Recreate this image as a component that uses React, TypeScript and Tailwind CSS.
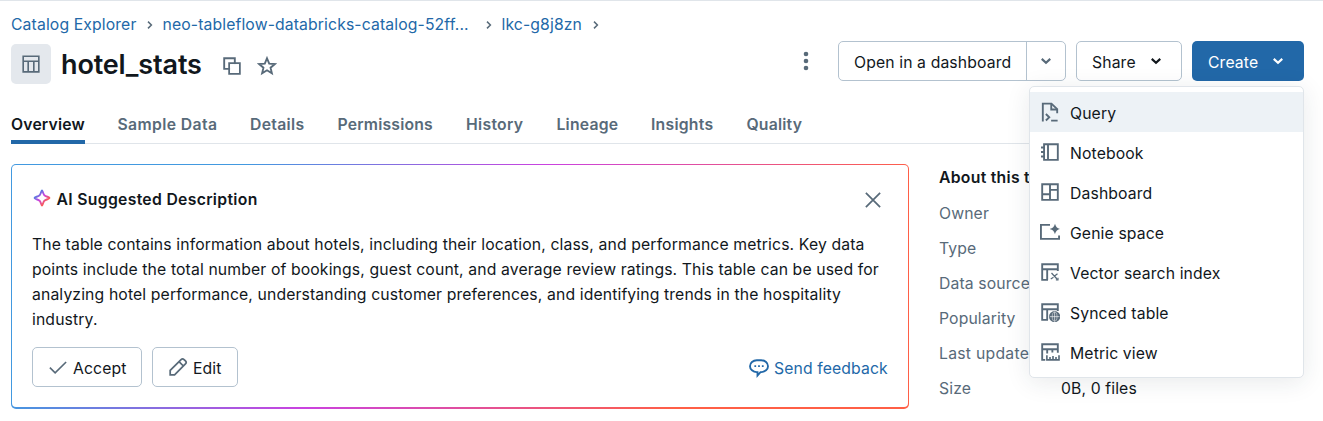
import type { ReactNode } from "react";

type IconProps = { children: ReactNode; className?: string };

function Icon({ children, className = "" }: IconProps) {
  return (
    <svg viewBox="0 0 16 16" className={`size-5 shrink-0 ${className}`} fill="none" stroke="currentColor" strokeWidth="1.5">
      {children}
    </svg>
  );
}

function Chevron({ className = "" }: { className?: string }) {
  return (
    <Icon className={className}>
      <path d="M4.6 6.3 8 9.5l3.4-3.2" strokeWidth="1.7" />
    </Icon>
  );
}

function Separator({ className }: { className: string }) {
  return (
    <svg viewBox="0 0 6 10" className={`h-[10px] w-[6px] shrink-0 text-[#586a79] ${className}`} fill="none" stroke="currentColor" strokeWidth="1.5">
      <path d="M1 1.6 4.4 5 1 8.4" />
    </svg>
  );
}

const tableTop = "M6.4 14.25H1.75V1.75h12.5v5.5M1.75 5.75h12.5";

const menu: { label: string; icon: ReactNode }[] = [
  {
    label: "Query",
    icon: (
      <>
        <path d="M2.25 15.6V1.25h6.9l4.6 4.5V9" />
        <path d="M9 1.500v4.500h4.700" />
        <path d="m4.700 9.600 2.700 2.600-2.700 2.600M8.900 14.850h5.200" />
      </>
    ),
  },
  {
    label: "Notebook",
    icon: <path d="M3.250 1.750h11v12.500h-11zM6.400 1.750v12.500M.8 4.400h2.400M.8 8h2.400M.8 11.600h2.400" />,
  },
  {
    label: "Dashboard",
    icon: <path d="M1.750 1.750h12.500v12.500H1.750zM8 1.750v12.500M1.750 9.750H8M8 6.250h6.250" />,
  },
  {
    label: "Genie space",
    icon: (
      <>
        <path d="M8 2.250H.750v11.200h14.500v-2.700" />
        <path d="M12 1.400c.8 2.600 1.600 3.400 4.200 4.200-2.600.8-3.400 1.600-4.200 4.200-.8-2.600-1.600-3.400-4.200-4.200C10.400 4.800 11.200 4 12 1.400z" fill="currentColor" stroke="none" />
      </>
    ),
  },
  {
    label: "Vector search index",
    icon: (
      <>
        <path d={tableTop} />
        <path d="M5.750 5.750v8.500" />
        <path d="m9.200 8.800 4.600 5M14 9.400l-2.600 2M8.600 13.600l2.200-1.400" strokeWidth="1" />
        <path d="M14.400 12.600v1.700h-1.700" strokeWidth=".9" />
      </>
    ),
  },
  {
    label: "Synced table",
    icon: (
      <>
        <path d={tableTop} />
        <path d="M5.750 5.750v8.500" />
        <circle cx="11.700" cy="11.700" r="4.500" fill="currentColor" stroke="none" />
        <path d="M7.800 11.700h7.800M11.700 7.800v7.800" stroke="white" strokeWidth=".5" />
        <ellipse cx="11.700" cy="11.700" rx="1.900" ry="3.700" stroke="white" strokeWidth=".4" />
      </>
    ),
  },
  {
    label: "Metric view",
    icon: (
      <>
        <path d="M4.200 14.250H1.750V1.750h12.500V8.600M1.750 5.750h12.500M5.750 5.750V9.200M9.900 5.750V8.400" />
        <path d="M5.500 10.500v3.750h9.700V10.500M8 14.250V12M10.400 14.250v-3M12.800 14.250V12" strokeWidth="1.300" />
      </>
    ),
  },
];

const tabs = [
  { label: "Overview", width: "w-[74px]", spacing: "tracking-[0.16px]" },
  { label: "Sample Data", width: "w-[100px]", spacing: "tracking-[0.38px]" },
  { label: "Details", width: "w-[55px]", spacing: "tracking-[0.3px]" },
  { label: "Permissions", width: "w-[96px]", spacing: "tracking-[0.18px]" },
  { label: "History", width: "w-[58px]", spacing: "tracking-[0.3px]" },
  { label: "Lineage", width: "w-[62px]", spacing: "tracking-[0.2px]" },
  { label: "Insights", width: "w-[63px]", spacing: "tracking-[0.25px]" },
  { label: "Quality", width: "w-[57px]", spacing: "tracking-[0.2px]" },
];

const details = ["Owner", "Type", "Data source", "Popularity", "Last updated", "Size"];

function CreateMenu() {
  return (
    <div className="absolute top-[49px] right-0 z-10 h-[292px] w-[275px] rounded-[5px] border border-[#e0e5ea] bg-white pt-[5px] shadow-[0_4px_24px_rgba(27,49,57,0.10)]">
      {menu.map((item, i) => (
        <div key={item.label} className={`flex h-10 items-center gap-[10px] pl-[10px] ${i === 0 ? "bg-[#edf2f6]" : ""}`}>
          <Icon className="text-[#586a79]">{item.icon}</Icon>
          <span className="pt-[2px]">{item.label}</span>
        </div>
      ))}
    </div>
  );
}

export default function App() {
  return (
    <div className="flex h-[421px] w-[1323px] flex-col overflow-hidden border-t border-[#e0e5ea] bg-white pr-[19px] pl-[11px] font-['Inter',sans-serif] text-[15.75px] leading-[25px] tracking-[0.12px] whitespace-nowrap text-[#11171c]">
      <nav className="mt-[11px] flex h-[25px] shrink-0 items-center text-[#2268a8]">
        <span className="w-[125px]">Catalog Explorer</span>
        <Separator className="ml-[11px]" />
        <span className="ml-[9.500px] w-[307.500px]">neo-tableflow-databricks-catalog-52ff...</span>
        <Separator className="ml-[16px]" />
        <span className="ml-[9.500px] w-[80.500px]">lkc-g8j8zn</span>
        <Separator className="ml-[11px]" />
      </nav>

      <header className="flex h-[48px] shrink-0 items-start">
        <div className="mt-[7px] flex size-10 items-center justify-center rounded-[5px] bg-[#e4e8ed] text-[#586a79]">
          <Icon>
            <path d="M1.750 1.750h12.500v12.500H1.750zM1.750 5.750h12.500M5.750 5.750v8.500M10.250 5.750v8.500" strokeWidth="1.300" />
          </Icon>
        </div>
        <h1 className="mt-[10px] ml-[10px] w-[140px] text-[27px] leading-[36px] font-semibold tracking-[-0.15px]">hotel_stats</h1>
        <Icon className="mt-[19px] ml-[21px] text-[#586a79]">
          <path d="M1.750 1.750h8.500v8.500h-8.500zM5.750 5.750h8.500v8.500h-8.500z" />
          <path d="M6.450 6.450h7.100v7.100h-7.100z" fill="white" stroke="none" />
        </Icon>
        <Icon className="mt-[19px] ml-[15px] text-[#586a79]">
          <path d="m8 1.800 1.750 4.250 4.600.35-3.500 2.950 1.050 4.500L8 11.450l-3.900 2.400 1.050-4.500-3.500-2.950 4.600-.35z" strokeWidth="1.500" />
        </Icon>

        <div className="relative ml-auto flex items-center pt-[4px]">
          <svg viewBox="0 0 6 20" className="mr-[29px] h-5 w-[6px] text-[#586a79]" fill="currentColor">
            <circle cx="3" cy="3" r="2.300" />
            <circle cx="3" cy="10" r="2.300" />
            <circle cx="3" cy="17" r="2.300" />
          </svg>
          <button className="flex h-10 w-[228px] items-center rounded-[5px] border border-[#b3c2cf]">
            <span className="w-[187px] pt-[2px] pl-[15px] text-left">Open in a dashboard</span>
            <span className="flex h-full flex-1 items-center justify-center border-l border-[#b3c2cf] text-[#586a79]">
              <Chevron />
            </span>
          </button>
          <button className="ml-[10px] flex h-10 w-[106px] items-center rounded-[5px] border border-[#b3c2cf] pl-[15px]">
            <span className="w-[44px] pt-[2px] text-left">Share</span>
            <Chevron className="ml-[10px]" />
          </button>
          <button className="ml-[10px] flex h-10 w-[112px] items-center rounded-[5px] bg-[#2268a8] pl-4 text-white">
            <span className="w-[50px] pt-[2px] text-left">Create</span>
            <Chevron className="ml-[10px]" />
          </button>
          <CreateMenu />
        </div>
      </header>

      <div className="mt-[19px] flex h-[40px] shrink-0 gap-[32.500px] border-b border-[#e0e5ea] font-semibold text-[#586a79]">
        {tabs.map((tab, i) => (
          <div key={tab.label} className={`h-[40px] ${tab.width} ${tab.spacing} pt-[8px] ${i === 0 ? "border-b-4 border-[#2268a8] text-[#11171c]" : ""}`}>
            {tab.label}
          </div>
        ))}
      </div>

      <main className="mt-[20px] flex gap-[30px]">
        <section className="h-[245px] w-[898px] shrink-0 rounded-[5px] bg-[linear-gradient(135deg,#4299e0_20.5%,#ca42e0_46.91%,#ff5f46_79.5%)] px-px pt-px pb-[2px]">
          <div className="h-full rounded-[4px] bg-white px-5 pt-[21px]">
            <div className="flex h-[27px] items-center">
              <svg viewBox="0 0 16 16" className="-mt-[4px] size-5" fill="none">
                <defs>
                  <linearGradient id="spark" x1="2" y1="2" x2="14" y2="14" gradientUnits="userSpaceOnUse">
                    <stop offset=".2" stopColor="#4c80e0" />
                    <stop offset=".47" stopColor="#ca42e0" />
                    <stop offset=".8" stopColor="#ff5f46" />
                  </linearGradient>
                </defs>
                <path d="M8 1.900c.5 0 .8 2.700 1.800 3.800C10.900 6.900 14 7.200 14 8s-3.100 1.100-4.200 2.300C8.800 11.400 8.500 14.100 8 14.100s-.8-2.700-1.800-3.800C5.100 9.100 2 8.800 2 8s3.100-1.100 4.200-2.300C7.200 4.600 7.500 1.900 8 1.900z" stroke="url(#spark)" strokeWidth="1.500" />
              </svg>
              <h2 className="ml-[4.500px] font-semibold tracking-[0.31px]">AI Suggested Description</h2>
              <Icon className="mr-[5px] ml-auto text-[#586a79]">
                <path d="m2.300 2.300 11.400 11.400M13.700 2.300 2.300 13.700" strokeWidth="1.400" />
              </Icon>
            </div>
            <p className="mt-[19px] tracking-[0.125px]">
              The table contains information about hotels, including their location, class, and performance metrics. Key data
              <br />
              points include the total number of bookings, guest count, and average review ratings. This table can be used for
              <br />
              analyzing hotel performance, understanding customer preferences, and identifying trends in the hospitality
              <br />
              industry.
            </p>
            <div className="mt-[15px] flex items-center">
              <button className="flex h-10 w-[110px] items-center rounded-[5px] border border-[#b3c2cf] pl-[15px]">
                <Icon className="text-[#586a79]">
                  <path d="m1.500 8.500 4.200 4.200L14.500 4" strokeWidth="1.300" />
                </Icon>
                <span className="ml-[5px] pt-[2px]">Accept</span>
              </button>
              <button className="ml-[10px] flex h-10 w-[86px] items-center rounded-[5px] border border-[#b3c2cf] pl-[15px]">
                <Icon className="text-[#586a79]">
                  <path d="M1.750 14.250v-3.500l8.700-8.700a1.700 1.700 0 0 1 2.400 0l1.100 1.100a1.700 1.700 0 0 1 0 2.400l-8.700 8.700zM8.800 3.700l3.500 3.500" strokeWidth="1.400" />
                </Icon>
                <span className="ml-[5px] pt-[2px]">Edit</span>
              </button>
              <a className="ml-auto flex items-center text-[#2268a8]">
                <Icon className="mt-px">
                  <path d="M6.200 1.750h3.600a5.400 4.750 0 0 1 0 9.500H9.200L6.800 14v-2.750h-.6a5.400 4.750 0 0 1 0-9.500z" />
                  <path d="M4.300 5.800h1.400v1.400H4.300zM7.300 5.800h1.400v1.400H7.300zM10.300 5.800h1.400v1.400h-1.400z" fill="currentColor" stroke="none" />
                </Icon>
                <span className="ml-[5px] w-[114px] pt-[2px]">Send feedback</span>
              </a>
            </div>
          </div>
        </section>

        <aside className="pt-px text-[#586a79]">
          <h2 className="font-semibold tracking-[0.28px] text-[#11171c]">About this table</h2>
          <dl className="mt-[10.600px] flex flex-col gap-[10.150px]">
            {details.map((label) => (
              <div key={label} className="flex h-[25px]">
                <dt className={`w-[122px] ${label === "Last updated" ? "tracking-[0.26px]" : ""}`}>{label}</dt>
                {label === "Size" && <dd className="text-[#11171c]">0B, 0 files</dd>}
              </div>
            ))}
          </dl>
        </aside>
      </main>
    </div>
  );
}
